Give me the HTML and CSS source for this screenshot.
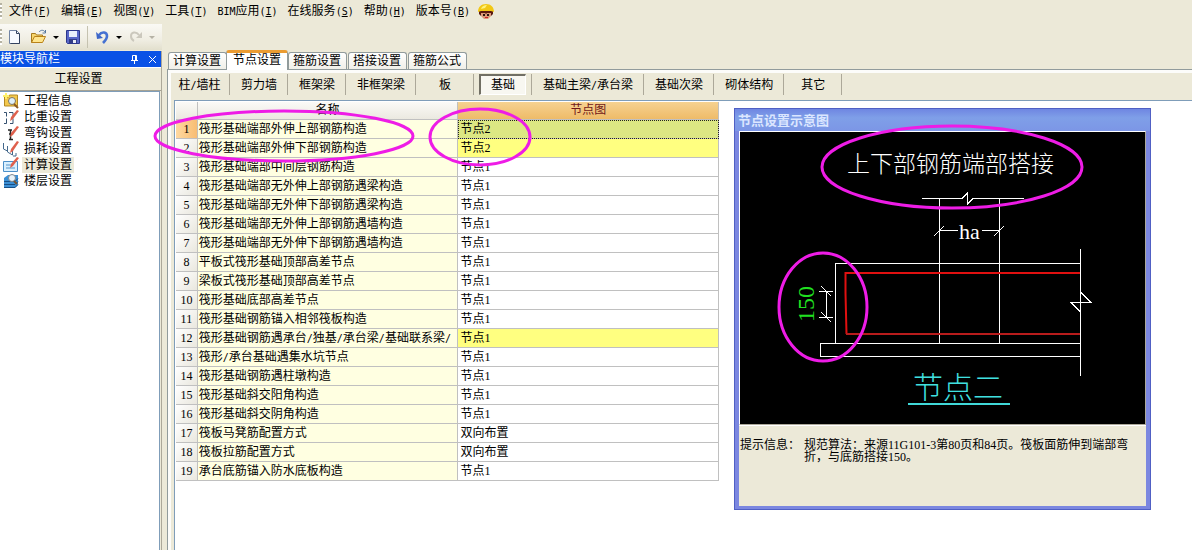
FILE: index.html
```html
<!DOCTYPE html>
<html lang="zh-CN">
<head>
<meta charset="utf-8">
<title>工程设置</title>
<link rel="stylesheet" href="styles.css">
</head>
<body>
<div class="app">
  <nav class="menubar">
    <span class="grip"></span>
    <button class="menu">文件<span class="half">(<u>F</u>)</span></button>
    <button class="menu">编辑<span class="half">(<u>E</u>)</span></button>
    <button class="menu">视图<span class="half">(<u>V</u>)</span></button>
    <button class="menu">工具<span class="half">(<u>T</u>)</span></button>
    <button class="menu"><span class="half">BIM</span>应用<span class="half">(<u>I</u>)</span></button>
    <button class="menu">在线服务<span class="half">(<u>S</u>)</span></button>
    <button class="menu">帮助<span class="half">(<u>H</u>)</span></button>
    <button class="menu">版本号<span class="half">(<u>B</u>)</span></button>
    <svg class="face" width="16" height="16" viewBox="0 0 16 16"><path d="M3 8h10v5l-3 3H6l-3-3z" fill="#dc9a78"/><path d="M1 8h14v3l-2 2v-3H9l-1 1-1-1H3v3l-2-2z" fill="#5b1a10"/><path d="M5 11h2v2H5zM9 11h2v2H9z" fill="#2a1410"/><path d="M7 14h3v1H7z" fill="#c8202a"/><path d="M0 9C0 4 3 1 8 1s8 3 8 8l-3-1H3z" fill="#f2c814"/><path d="M3 6c1-3 3-4 6-4l-2 3z" fill="#fff27a"/></svg>
  </nav>

  <div class="toolbar">
    <span class="grip"></span>
    <button class="tool" aria-label="新建"><svg width="16" height="16" viewBox="0 0 16 16"><path d="M2.500 1.500h7l3 3v10h-10z" fill="#f8fbff" stroke="#7284a4"/><path d="M9.500 1.500v3h3M12.500 5v9.500h-9" fill="none" stroke="#34435f"/></svg></button>
    <button class="tool open" aria-label="打开"><svg width="18" height="16" viewBox="0 0 18 16"><path d="M1.500 13.500v-9h4l1 1.500h6v2" fill="#f7d66d" stroke="#a77a1d"/><path d="M1.500 13.500l3-6h11l-3 6z" fill="#ffe58d" stroke="#b9821a"/><path d="M9 3c2-2.500 5-2 6 0m.5-2v3h-3" fill="none" stroke="#56779c"/></svg></button>
    <span class="caret"></span>
    <button class="tool save" aria-label="保存"><svg width="16" height="16" viewBox="0 0 16 16"><path d="M1.500 1.500h13v13h-12l-1-1z" fill="#5967c8" stroke="#2c378d"/><path d="M4 2h8v6H4z" fill="#e9effc"/><path d="M4 10h8v4H4z" fill="#313b86"/><path d="M8 11h3v3H8z" fill="#e7e9f6"/></svg></button>
    <span class="rule"></span>
    <button class="tool" aria-label="撤销"><svg width="16" height="16" viewBox="0 0 16 16"><path d="M4 6C7 2 12 3 12 7c0 3-2 5-4 7" fill="none" stroke="#4672d2" stroke-width="2.600"/><path d="M1 3l1 7 6-1z" fill="#3d66c8"/></svg></button>
    <span class="caret"></span>
    <button class="tool redo" aria-label="重做"><svg width="16" height="16" viewBox="0 0 16 16"><path d="M11 6C8 2 3 3 3 7c0 2 1 4 3 5" fill="none" stroke="#cbc8bd" stroke-width="2"/><path d="M14 3v6H8z" fill="#cbc8bd"/></svg></button>
    <span class="caret off"></span>
  </div>

  <div class="workspace">
    <aside class="navigator">
      <header class="nav-title"><span class="nav-name">模块导航栏</span>
        <button class="nav-btn" aria-label="固定"><svg width="9" height="9" viewBox="0 0 9 9"><path d="M2.500 5V.5h4V5M5.500 1v4M1 5.500h7M4.500 6v3" fill="none" stroke="#fff"/></svg></button>
        <button class="nav-btn" aria-label="关闭"><svg width="9" height="9" viewBox="0 0 9 9"><path d="M1 1l7 7M8 1L1 8" fill="none" stroke="#fff"/></svg></button>
      </header>
      <button class="nav-group">工程设置</button>
      <ul class="tree">
        <li><svg width="16" height="16" viewBox="0 0 16 16"><path d="M1.500 13V4h4l1-2h8v11z" fill="#f3c84d" stroke="#b48924"/><path d="M3 0v6M0 3h6" stroke="#fff06a" stroke-width="2"/><circle cx="9" cy="8" r="3.500" fill="#dff0fa" stroke="#7c7460"/><path d="M11 11l4 4" stroke="#8a5a20" stroke-width="2"/></svg><span>工程信息</span></li>
        <li><svg width="16" height="16" viewBox="0 0 16 16"><path d="M1 3.500h2.500v4M1 14.500h2.500v-5M6 3.500h4v5M7 14.500h3v-5" fill="none" stroke="#35506f"/><path d="M14 1l2 1-6 8-3 2 1-4z" fill="#df604d"/></svg><span>比重设置</span></li>
        <li><svg width="16" height="16" viewBox="0 0 16 16"><path d="M5 5h4M7.500 5v9M6 14.500h4M6 9h4" fill="none" stroke="#222" stroke-width="1.500"/><path d="M14 1l2 1-6 8-3 2 1-4z" fill="#df604d"/></svg><span>弯钩设置</span></li>
        <li><svg width="16" height="16" viewBox="0 0 16 16"><path d="M.5 2v6l4 2V5v6l5 3V9M10 15h3v-3" fill="none" stroke="#45698c"/><path d="M14 0l2 1-6 9-3 2 1-4z" fill="#df604d"/></svg><span>损耗设置</span></li>
        <li class="current"><svg width="16" height="16" viewBox="0 0 16 16"><path d="M.5 4.500h14v10H.5z" fill="#d9f0ff" stroke="#4c8fc8"/><path d="M3 8h6M3 11h9" stroke="#5795ca"/><path d="M14 0l2 1-6 8-3 2 1-4z" fill="#df604d"/></svg><span>计算设置</span></li>
        <li><svg width="16" height="16" viewBox="0 0 16 16"><path d="M1 5l4-3h10v10l-3 3H1z" fill="#3b8fd5"/><path d="M1 8.500h11l3-3M1 11.500h11l3-3M1 14.500h11l3-3" fill="none" stroke="#174f86"/><circle cx="9" cy="5" r="3.500" fill="#e8f3fa" stroke="#7d8790"/><path d="M11 8l3 3" stroke="#745432" stroke-width="2"/></svg><span>楼层设置</span></li>
      </ul>
    </aside>

    <main class="content">
      <div class="tabs">
        <button class="tab">计算设置</button>
        <button class="tab active">节点设置</button>
        <button class="tab">箍筋设置</button>
        <button class="tab">搭接设置</button>
        <button class="tab">箍筋公式</button>
      </div>
      <div class="page">
        <div class="kinds">
          <div class="cell"><button class="kind">柱<span class="half">/</span>墙柱</button></div>
          <div class="cell"><button class="kind">剪力墙</button></div>
          <div class="cell"><button class="kind">框架梁</button></div>
          <div class="cell"><button class="kind">非框架梁</button></div>
          <div class="cell"><button class="kind">板</button></div>
          <div class="cell"><button class="kind pressed">基础</button></div>
          <div class="cell"><button class="kind">基础主梁<span class="half">/</span>承台梁</button></div>
          <div class="cell"><button class="kind">基础次梁</button></div>
          <div class="cell"><button class="kind">砌体结构</button></div>
          <div class="cell"><button class="kind">其它</button></div>
        </div>
        <div class="sheet">
          <table class="grid">
            <colgroup><col class="c-num"><col class="c-half"><col class="c-half"></colgroup>
            <thead><tr><th></th><th>名称</th><th class="sel">节点图</th></tr></thead>
            <tbody>
              <tr><th class="on">1</th><td>筏形基础端部外伸上部钢筋构造</td><td class="focus">节点2</td></tr>
              <tr><th>2</th><td>筏形基础端部外伸下部钢筋构造</td><td class="changed">节点2</td></tr>
              <tr><th>3</th><td>筏形基础端部中间层钢筋构造</td><td>节点1</td></tr>
              <tr><th>4</th><td>筏形基础端部无外伸上部钢筋遇梁构造</td><td>节点1</td></tr>
              <tr><th>5</th><td>筏形基础端部无外伸下部钢筋遇梁构造</td><td>节点1</td></tr>
              <tr><th>6</th><td>筏形基础端部无外伸上部钢筋遇墙构造</td><td>节点1</td></tr>
              <tr><th>7</th><td>筏形基础端部无外伸下部钢筋遇墙构造</td><td>节点1</td></tr>
              <tr><th>8</th><td>平板式筏形基础顶部高差节点</td><td>节点1</td></tr>
              <tr><th>9</th><td>梁板式筏形基础顶部高差节点</td><td>节点1</td></tr>
              <tr><th>10</th><td>筏形基础底部高差节点</td><td>节点1</td></tr>
              <tr><th>11</th><td>筏形基础钢筋锚入相邻筏板构造</td><td>节点1</td></tr>
              <tr><th>12</th><td>筏形基础钢筋遇承台<span class="half">/</span>独基<span class="half">/</span>承台梁<span class="half">/</span>基础联系梁<span class="half">/</span></td><td class="changed">节点1</td></tr>
              <tr><th>13</th><td>筏形<span class="half">/</span>承台基础遇集水坑节点</td><td>节点1</td></tr>
              <tr><th>14</th><td>筏形基础钢筋遇柱墩构造</td><td>节点1</td></tr>
              <tr><th>15</th><td>筏形基础斜交阳角构造</td><td>节点1</td></tr>
              <tr><th>16</th><td>筏形基础斜交阴角构造</td><td>节点1</td></tr>
              <tr><th>17</th><td>筏板马凳筋配置方式</td><td>双向布置</td></tr>
              <tr><th>18</th><td>筏板拉筋配置方式</td><td>双向布置</td></tr>
              <tr><th>19</th><td>承台底筋锚入防水底板构造</td><td>节点1</td></tr>
            </tbody>
          </table>

          <section class="preview">
            <h2 class="preview-title">节点设置示意图</h2>
            <svg class="drawing" viewBox="740 132 405 292" role="img" aria-label="节点二">
              <text class="cad-head" x="847" y="172">上下部钢筋端部搭接</text>
              <g class="thin">
                <path d="M922 198.500H962L967.500 193V204L973 198.500H1024"/>
                <path d="M939.500 198V343M999.500 198V343"/>
                <path d="M939 230.500H958M982 230.500H1000M934 236l10-10M994 236l10-10"/>
                <path d="M1080 263.500H835.500V343M1080 343.500H820.500V356.500H1080"/>
                <path d="M1080.500 249V292L1091 302.500H1071L1080.500 312V376M1080.500 292V312"/>
                <path d="M826.500 291V317M819 291.500H833M819 317.500H833M821 286l10 10M821 312l10 10"/>
              </g>
              <path class="bar" d="M1080 273H845.500V293L846.500 334"/>
              <path class="bar low" d="M846 334H1080"/>
              <text class="cad-dim" x="959" y="239">ha</text>
              <text class="cad-len" transform="translate(814 322) rotate(-90)">150</text>
              <text class="cad-name" x="913" y="398">节点二</text>
              <path class="cad-rule" d="M908 404H1010"/>
            </svg>
            <div class="hint"><span class="hint-label">提示信息：</span><p class="hint-text">规范算法：来源11G101-3第80页和84页。筏板面筋伸到端部弯折，与底筋搭接150。</p></div>
          </section>
        </div>
      </div>
    </main>
  </div>

  <svg class="marks" width="1192" height="550" viewBox="0 0 1192 550" aria-hidden="true">
    <ellipse cx="284" cy="136" rx="129" ry="25"/>
    <ellipse cx="480" cy="137" rx="50" ry="28"/>
    <ellipse cx="952" cy="167" rx="130" ry="41"/>
    <ellipse cx="823" cy="307" rx="44" ry="54"/>
  </svg>
</div>
</body>
</html>
```

FILE: styles.css
```css
* { box-sizing: border-box; }

body {
  margin: 0;
  background: #ece9d8;
  color: #000;
  font: 12px/16px "Liberation Serif", "Noto Sans CJK SC", serif;
}

button {
  border: 0;
  padding: 0;
  background: none;
  color: inherit;
  font: inherit;
  white-space: nowrap;
}

.app {
  position: relative;
  display: flex;
  flex-direction: column;
  min-height: 100vh;
  overflow: hidden;
}

.half { font-family: "DejaVu Sans Mono", monospace; font-size: 10px; line-height: 10px; }

.grip {
  width: 2px;
  height: 16px;
  background: repeating-linear-gradient(#b5b2a2 0 2px, #fff 2px 4px);
}

/* Menu bar */
.menubar { display: flex; align-items: center; gap: 10px; height: 21px; }
.menubar .grip { margin-right: -3px; }
.face { margin-left: -2px; }

/* Toolbar */
.toolbar {
  display: flex;
  align-items: center;
  width: 162px;
  height: 26px;
  margin: 3px 0 1px;
  background: linear-gradient(#faf9f5, #f0eee3 60%, #e2dfcd);
}
.tool { display: flex; margin-left: 5px; }
.open { margin-left: 7px; }
.save { margin-left: 6px; }
.redo { margin-left: 6px; }
.rule { width: 1px; height: 22px; margin: 0 2px 0 6px; background: #c5c2b0; }
.caret {
  margin-left: 5px;
  border: 3px solid transparent;
  border-top-color: #000;
  border-bottom: 0;
}
.caret.off { border-top-color: #b5b2a5; }

.workspace { display: flex; flex: 1; }

/* Navigator */
.navigator {
  display: flex;
  flex-direction: column;
  width: 162px;
  border-right: 1px solid #aca899;
}
.nav-title {
  display: flex;
  align-items: center;
  gap: 9px;
  height: 16px;
  padding-right: 4px;
  background: #0a52e6;
  color: #fff;
}
.nav-name { flex: 1; }
.nav-btn { display: flex; }
.nav-group {
  height: 24px;
  padding-right: 4px;
  border-top: 1px solid #fff;
  border-bottom: 1px solid #a5a294;
}
.tree {
  flex: 1;
  margin: 0 1px 0 0;
  padding: 1px 0 0 3px;
  border-top: 1px solid #7f9db9;
  border-right: 1px solid #7f9db9;
  background: #fff;
  list-style: none;
}
.tree li { display: flex; gap: 3px; height: 16px; }
.tree span { padding: 0 2px; }
.current span { background: #ece9d8; }

/* Tabs */
.content { display: flex; flex: 1; flex-direction: column; padding-left: 5px; }
.tabs { display: flex; align-items: flex-end; gap: 1px; height: 18px; padding-left: 1px; }
.tab {
  height: 17px;
  padding: 0 5px 0 4px;
  border: 1px solid #919b9c;
  border-bottom: 0;
  border-radius: 3px 3px 0 0;
  background: linear-gradient(#fff, #f0efe8);
}
.tab.active {
  height: 20px;
  margin: 0 -1px -1px -2px;
  padding: 0 6px 3px;
  border-top: 3px solid #eb9c32;
  background: #fff;
  line-height: 14px;
  z-index: 1;
}
.page {
  display: flex;
  flex: 1;
  flex-direction: column;
  padding-left: 4px;
  border-top: 1px solid #919b9c;
  border-left: 1px solid #919b9c;
  box-shadow: inset 3px 3px #fcfcfa;
}

/* Member kinds */
.kinds { display: flex; height: 30px; padding-top: 4px; }
.cell {
  display: flex;
  min-width: 58px;
  height: 21px;
  border-right: 1px solid #aca899;
}
.kind { flex: 1; padding: 0 10px 0 11px; }
.cell:first-child .kind { padding: 0 8px 0 6px; }
.kind.pressed {
  margin: 0 5px;
  padding: 0 9px;
  border: 1px solid #fff;
  border-top: 2px solid #716f64;
  border-left: 2px solid #716f64;
  background: #f8f7f1;
}

.sheet {
  display: flex;
  flex: 1;
  align-items: flex-start;
  gap: 15px;
  margin-left: 2px;
  padding: 1px 41px 0 1px;
  border-top: 1px solid #7f9db9;
  border-left: 1px solid #7f9db9;
  background: #fff;
}

/* Settings table */
.grid {
  flex: 543 1 0;
  width: 0;
  border-spacing: 0;
  table-layout: fixed;
}
.c-num { width: 21px; }
.c-half { width: 48%; }
.grid th, .grid td {
  height: 19px;
  padding: 0 1px;
  border-right: 1px solid #c0c0c0;
  border-bottom: 1px solid #c0c0c0;
  font-weight: normal;
  line-height: 18px;
  text-align: left;
  white-space: nowrap;
  overflow: hidden;
}
.grid th { background: linear-gradient(135deg, #fff, #e9e7de); text-align: center; }
.grid thead th { height: 18px; line-height: 17px; background: linear-gradient(#fbfaf7, #ebe9e0); }
.grid thead .sel { background: linear-gradient(#f6d291, #eebb68); color: #701818; }
.grid td:nth-child(2) { background: #ffffe1; }
.grid td:nth-child(3) { padding-left: 2px; }
.grid .on { background: linear-gradient(90deg, #ffd9a0, #f8bd73); }
.grid .focus { background: #dce783; outline: 1px dotted #222; outline-offset: -1px; }
.grid .changed { background: #ffff80; }

/* Diagram window */
.preview {
  flex: 407 1 0;
  margin-top: 6px;
  padding: 0 4px 3px;
  border: 1px solid #5060c4;
  background: #7b87e0;
}
.preview-title {
  margin: 0 -4px;
  padding: 2px 3px 0;
  height: 22px;
  background: linear-gradient(#6f86e2, #7f9fe8 40%, #7c96e6);
  color: #dbe6ff;
  font-size: 13px;
  line-height: 20px;
}
.drawing {
  display: block;
  width: 100%;
  border: 1px solid #aca899;
  border-top-color: #fff;
  border-left-color: #fff;
  background: #000;
}
.drawing text { font-family: "Liberation Serif", "Noto Sans CJK SC", serif; font-weight: 300; }
.cad-head { fill: #fff; font-size: 23px; }
.cad-dim { fill: #fff; font-size: 22px; }
.cad-len { fill: #20e020; font-size: 24px; }
.cad-name { fill: #40e0e0; font-size: 30px; }
.cad-rule { stroke: #40d8d8; stroke-width: 2; }
.thin { fill: none; stroke: #fff; shape-rendering: crispEdges; }
.bar { fill: none; stroke: #e01010; stroke-width: 2; }
.bar.low { stroke: #b81c1c; }
.hint {
  display: flex;
  min-height: 81px;
  padding: 13px 7px 0 1px;
  border-top: 1px solid #fff;
  background: #ece9d8;
  line-height: 12px;
}
.hint-label { flex: none; width: 64px; }
.hint-text { margin: 0; }

/* Marker rings drawn over the window */
.marks { position: absolute; top: 0; left: 0; pointer-events: none; }
.marks ellipse { fill: none; stroke: #ee1ce6; stroke-width: 3; }
```
